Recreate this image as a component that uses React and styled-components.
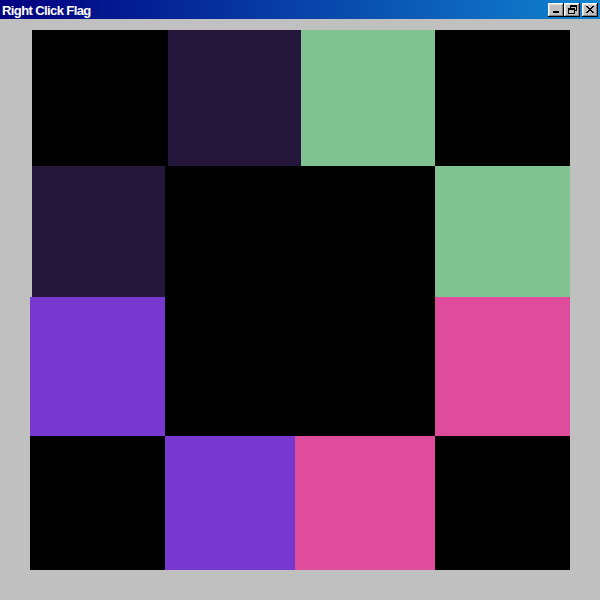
import React from "react";
import styled, { createGlobalStyle } from "styled-components";

const Global = createGlobalStyle`
  html, body {
    margin: 0;
    padding: 0;
    background: #c0c0c0;
    font-family: "Liberation Sans", Arial, sans-serif;
  }
`;

const Window = styled.div`
  width: 600px;
  height: 600px;
  display: flex;
  flex-direction: column;
  background: #c0c0c0;
  overflow: hidden;
`;

const TitleBar = styled.div`
  height: 19px;
  display: flex;
  align-items: center;
  justify-content: space-between;
  padding: 0 2px 0 2px;
  background: linear-gradient(to right, #000080, #1084d0);
  flex-shrink: 0;
`;

const Title = styled.span`
  color: #ffffff;
  font-family: "Liberation Sans", Arial, sans-serif;
  font-weight: bold;
  font-size: 13px;
  letter-spacing: -0.6px;
  line-height: 1;
  padding-top: 1px;
`;

const Controls = styled.div`
  display: flex;
  align-items: center;
`;

const CtlButton = styled.button`
  width: 16px;
  height: 14px;
  padding: 0;
  margin: 0 0 0 ${(p) => (p.$gap ? "2px" : "0")};
  display: flex;
  align-items: center;
  justify-content: center;
  background: #c0c0c0;
  border: none;
  box-shadow: inset -1px -1px #000000, inset 1px 1px #ffffff,
    inset -2px -2px #808080, inset 2px 2px #dfdfdf;
`;

const Content = styled.div`
  flex: 1;
  padding: 11px 30px 0 30px;
`;

const Board = styled.div`
  display: flex;
  flex-direction: column;
  width: 540px;
`;

const Row = styled.div`
  display: grid;
  grid-template-columns: ${(p) => p.$cols};
  height: ${(p) => p.$h}px;
  padding-left: ${(p) => p.$indent || 0}px;
`;

const Tile = styled.div`
  background: ${(p) => p.$c};
`;

const C = {
  k: "#000000",
  d: "#23163a",
  g: "#80c391",
  v: "#7838d0",
  p: "#e04c9c",
};

const rows = [
  { h: 136, indent: 2, cols: "136px 133px 134px 135px", tiles: "kdgk" },
  { h: 131, indent: 2, cols: "133px 135px 135px 135px", tiles: "dkkg" },
  { h: 139, indent: 0, cols: "135px 135px 135px 135px", tiles: "vkkp" },
  { h: 134, indent: 0, cols: "135px 130px 140px 135px", tiles: "kvpk" },
];

const MinIcon = () => (
  <svg width="8" height="7" viewBox="0 0 8 7">
    <rect x="1" y="5" width="6" height="2" fill="#000" />
  </svg>
);

const RestoreIcon = () => (
  <svg width="9" height="9" viewBox="0 0 9 9" shapeRendering="crispEdges">
    <rect x="2.5" y="0.5" width="6" height="5" fill="none" stroke="#000" />
    <rect x="2" y="0" width="7" height="2" fill="#000" />
    <rect x="0.5" y="3.5" width="6" height="5" fill="#c0c0c0" stroke="#000" />
    <rect x="0" y="3" width="7" height="2" fill="#000" />
  </svg>
);

const CloseIcon = () => (
  <svg width="8" height="7" viewBox="0 0 8 7" shapeRendering="crispEdges">
    <path
      d="M0 0h2v1h1v1h2v-1h1v-1h2v1h-1v1h-1v1h-1v1h1v1h1v1h1v1h-2v-1h-1v-1h-2v1h-1v1h-2v-1h1v-1h1v-1h1v-1h-1v-1h-1v-1h-1z"
      fill="#000"
    />
  </svg>
);

export default function App() {
  return (
    <>
      <Global />
      <Window>
        <TitleBar>
          <Title>Right Click Flag</Title>
          <Controls>
            <CtlButton aria-label="Minimize">
              <MinIcon />
            </CtlButton>
            <CtlButton aria-label="Restore">
              <RestoreIcon />
            </CtlButton>
            <CtlButton aria-label="Close" $gap>
              <CloseIcon />
            </CtlButton>
          </Controls>
        </TitleBar>
        <Content>
          <Board>
            {rows.map((r, i) => (
              <Row key={i} $h={r.h} $cols={r.cols} $indent={r.indent}>
                {r.tiles.split("").map((t, j) => (
                  <Tile key={j} $c={C[t]} />
                ))}
              </Row>
            ))}
          </Board>
        </Content>
      </Window>
    </>
  );
}
